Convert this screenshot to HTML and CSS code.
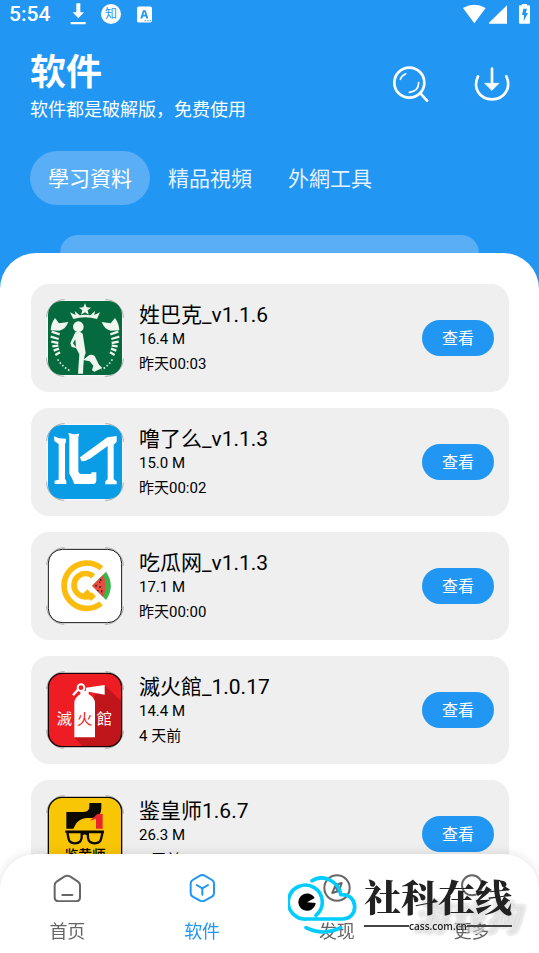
FILE: index.html
```html
<!DOCTYPE html>
<html lang="zh-CN">
  <head>
    <meta charset="UTF-8">
    <meta name="viewport" content="width=device-width, initial-scale=1">
    <title>软件</title>
    <link rel="stylesheet" href="styles.css">
  </head>
  <body>
    <div class="app">
      <header class="header">
        <div class="status-bar">
          <span class="time">5:54</span>
          <svg width="16" height="22" viewBox="211 11 48 66" fill="#fff">
            <path d="M230 12h12v27h11l-17 18-17-18h11zM213 68h45v7h-45z"/>
          </svg>
          <svg class="zhi" width="20" height="20" viewBox="0 0 20 20">
            <circle cx="10" cy="10" r="10" fill="#fff"/>
            <text x="10" y="14" class="zhi-text">知</text>
          </svg>
          <svg width="15" height="17" viewBox="0 0 45 50">
            <rect y="1" width="45" height="48" rx="5" fill="#fff"/>
            <path d="M10 37 18 12h8l8 25h-6l-2-6h-8l-2 6zM19 26h6l-3-9z" fill="#2196f3" fill-rule="evenodd"/>
            <path d="M23 42h4v3h-4zM31 42h4v3h-4zM38 42h4v3h-4z" fill="#2196f3"/>
          </svg>
          <div class="status-right">
            <svg width="23" height="20" viewBox="578 10 69 60" fill="#fff">
              <path d="M578 22q34-20 68 0l-34 46z"/>
            </svg>
            <svg width="18" height="20" viewBox="657 10 54 60" fill="#fff">
              <path d="M711 14v55h-54v-3z"/>
            </svg>
            <svg class="battery" width="11" height="20" viewBox="747 10 33 60">
              <path d="M756 10h15v4h7l2 2v51l-2 2h-29l-2-2V16l2-2h7z" fill="#fff"/>
              <path d="M760 24h11l-4 13h7l-13 25 1-19h-6z" fill="#2196f3"/>
            </svg>
          </div>
        </div>

        <div class="title-row">
          <div>
            <h1>软件</h1>
            <p class="subtitle">软件都是破解版，免费使用</p>
          </div>
          <div class="actions">
            <button type="button" aria-label="搜索">
              <svg width="36" height="36" viewBox="369 198 108 108" fill="none" stroke="#fff" stroke-linecap="round">
                <circle cx="418" cy="248" r="45" stroke-width="8"/>
                <path d="M452 281l19 21" stroke-width="8"/>
                <path d="M391 238q4-11 16-17M446 248q0 25-28 29" stroke-width="5"/>
              </svg>
            </button>
            <button type="button" aria-label="下载">
              <svg width="36" height="36" viewBox="612 198 108 108" fill="none" stroke="#fff" stroke-linecap="round">
                <path d="M624 229c-17 36 5 69 42 69s59-33 43-69" stroke-width="8"/>
                <path d="M666 206v48" stroke-width="8"/>
                <path d="M645 250h42l-21 21z" fill="#fff" stroke-width="2"/>
              </svg>
            </button>
          </div>
        </div>

        <div class="tabs">
          <button type="button" class="tab active">學习資料</button>
          <button type="button" class="tab">精品視頻</button>
          <button type="button" class="tab">外網工具</button>
        </div>
        <div class="banner"></div>
      </header>

      <main class="panel">
        <div class="card">
          <svg class="icon" viewBox="48 57 234 234">
            <rect class="ring" x="50" y="59" width="230" height="230" rx="54"/>
            <rect x="54" y="63" width="222" height="222" rx="42" fill="#056a3d"/>
            <g fill="#eef6ee">
              <path d="M165 70l5 12 13 1-10 8 3 13-11-7-12 7 4-13-10-8 13-1z"/>
              <path d="M120 97l17 8-3-12 15 13 16-2 16 2 14-13-2 12 17-8-9 20q-36-10-71 0z"/>
              <path d="M75 114l12 16 28-4q-8 22-27 26l-26-1q1-21 13-37z"/>
              <path d="M255 114l-13 16-27-4q8 22 27 26l26-1q-1-21-13-37z"/>
              <circle cx="145" cy="140" r="16"/>
              <path d="M136 157q14-5 22 4l9 58q-7 13-8 62h-15l4-58-10-19-13-3-4-12zM136 178l-7 12 9 12z" fill-rule="evenodd"/>
              <path d="M162 238l16-13q15-4 19 9l10 20 10 10-24 11-7-4 4-14-11-13-16-3z"/>
            </g>
            <path d="M65 155l24 8M62 170l24 7M64 185l21 4M67 199l18-2M71 212l16-6M76 225l14-8M265 155l-24 8M268 170l-24 7M266 185l-21 4M263 199l-18-2M259 212l-16-6M254 225l-14-8" stroke="#eef6ee" stroke-width="7"/>
            <path d="M83 238q15 24 41 36M247 238q-12 20-32 31" fill="none" stroke="#d5e8dc" stroke-width="5" stroke-dasharray="5 6"/>
          </svg>
          <div class="info">
            <h2>姓巴克_v1.1.6</h2>
            <p>16.4 M</p>
            <p>昨天00:03</p>
          </div>
          <button type="button" class="view">查看</button>
        </div>

        <div class="card">
          <svg class="icon" viewBox="48 54 234 234">
            <rect class="ring" x="50" y="56" width="230" height="230" rx="54"/>
            <rect x="54" y="60" width="222" height="222" rx="42" fill="#0a9de5"/>
            <g fill="#fff">
              <path d="M72 94l15 6 21 1v10l-3 5v106l4 5v10H74v-10l12-3V117l-13-9z"/>
              <path d="M115 84l17 4 16-2-3 11v98q0 12 10 12h26q4 0 4-5h14v24q0 11-10 11h-56q-7-20-15-31V96z"/>
              <path d="M150 157l82-60 28-4v17l-9 9v104l9 6v9h-34v-9l7-6V123l-51 37q-14 9-28 9z"/>
            </g>
          </svg>
          <div class="info">
            <h2>噜了么_v1.1.3</h2>
            <p>15.0 M</p>
            <p>昨天00:02</p>
          </div>
          <button type="button" class="view">查看</button>
        </div>

        <div class="card">
          <svg class="icon" viewBox="48 51 234 234">
            <rect class="ring" x="50" y="53" width="230" height="230" rx="54"/>
            <rect x="55" y="58" width="220" height="220" rx="42" fill="#fff" stroke="#111" stroke-width="3"/>
            <g fill="none" stroke="#fbbc0d" stroke-width="17">
              <path d="M214 115a68 68 0 1 0-1 105"/>
              <path d="M190 139a35 35 0 1 0-10 59M166 184l17 17 9-8"/>
            </g>
            <path d="M228 125q29 42 0 85l-42-43z" fill="#3bb44a"/>
            <path d="M220 134q13 34-1 67l-33-34z" fill="#e94b40"/>
            <path d="M212 147v6M198 164v6M210 168v6M215 181v6M204 180v4M207 157h4" stroke="#222" stroke-width="4"/>
          </svg>
          <div class="info">
            <h2>吃瓜网_v1.1.3</h2>
            <p>17.1 M</p>
            <p>昨天00:00</p>
          </div>
          <button type="button" class="view">查看</button>
        </div>

        <div class="card">
          <svg class="icon" viewBox="48 48 234 234">
            <rect class="ring" x="50" y="50" width="230" height="230" rx="54"/>
            <rect x="55" y="55" width="220" height="220" rx="42" fill="#ee1c23"/>
            <path d="M224 91l50 48v94q0 41-42 41h-73l-25-26 60-126z" fill="#c0151b"/>
            <rect x="55" y="55" width="220" height="220" rx="42" fill="none" stroke="#160506" stroke-width="4"/>
            <g fill="#fff">
              <path d="M133 247V145q0-17 18-27v-11h25v11q19 10 19 27v102z"/>
              <path d="M168 98l56-8v29l-56-10z"/>
            </g>
            <circle cx="153" cy="98" r="10" fill="none" stroke="#fff" stroke-width="6"/>
            <path d="M145 103l-16 18" stroke="#fff" stroke-width="7"/>
            <g class="mie-text">
              <text x="80" y="206">滅</text>
              <text x="141" y="206" class="red">火</text>
              <text x="200" y="206">館</text>
            </g>
          </svg>
          <div class="info">
            <h2>滅火館_1.0.17</h2>
            <p>14.4 M</p>
            <p>4 天前</p>
          </div>
          <button type="button" class="view">查看</button>
        </div>

        <div class="card">
          <svg class="icon" viewBox="48 60 234 234">
            <rect class="ring" x="50" y="62" width="230" height="230" rx="54"/>
            <rect x="55" y="67" width="220" height="220" rx="42" fill="#f9c606" stroke="#080600" stroke-width="4"/>
            <path d="M109 111h52q17 0 17-17V84h36v16q0 25-25 29h-20q-17 1-30 16l-9 16h-21z" fill="#0c0900"/>
            <path d="M180 137l22-20h16v44h-20v-29z" fill="#e8262c"/>
            <g fill="none" stroke="#0c0900" stroke-width="7">
              <path d="M112 171h43v17q-2 17-20 17t-20-17zM173 171h45l-4 17q-2 17-20 17t-20-17zM155 178q9-6 18 0M106 170h116"/>
            </g>
            <text x="104" y="254" class="jian-text">鉴黄师</text>
          </svg>
          <div class="info">
            <h2>鉴皇师1.6.7</h2>
            <p>26.3 M</p>
            <p>5 天前</p>
          </div>
          <button type="button" class="view">查看</button>
        </div>
      </main>
    </div>

    <nav class="nav">
      <a href="#">
        <svg viewBox="70 297 84 84">
          <path d="M81 320l24-16q8-4 16 0l24 16q6 4 6 12v35q0 12-12 12H87q-12 0-12-12v-35q0-8 6-12zM98 360h30"/>
        </svg>
        首页
      </a>
      <a href="#" class="active">
        <svg viewBox="475 298 84 84">
          <path d="M511 303q7-4 14 0l22 13q6 4 6 10v29q0 7-6 11l-22 12q-7 4-14 0l-22-12q-6-4-6-11v-29q0-6 6-10zM501 331l17 10 17-10M518 341v19"/>
        </svg>
        软件
      </a>
      <a href="#">
        <svg viewBox="0 0 84 84">
          <circle cx="42" cy="42" r="38"/>
          <path d="M56 27 38 33 28 57 48 51zM38 33l3 13 7 5"/>
        </svg>
        发现
      </a>
      <a href="#">
        <svg viewBox="0 0 84 84">
          <circle cx="42" cy="34" r="30"/>
        </svg>
        更多
      </a>
    </nav>

    <span class="stamp">游戏狗</span>
    <div class="brand">
      <svg width="70" height="60" viewBox="52 108 210 180" fill="none" stroke="#0cf" stroke-width="11" stroke-linecap="round">
        <path d="M136 226a51 51 0 1 0-26 11h105c50 0 50-76-4-73M124 122c34-22 82 3 86 42M106 263q52 26 104 0"/>
        <path d="M109 187l23-13a26 26 0 1 0 3 15z" fill="#000" stroke="none"/>
      </svg>
      <div class="brand-text">
        <span class="brand-name">社科在线</span>
        <span class="brand-url">cass.com.cn</span>
      </div>
    </div>
  </body>
</html>
```
FILE: styles.css
```css
* {
  box-sizing: border-box;
  margin: 0;
  padding: 0;
}
body {
  font-family: Roboto, "Noto Sans CJK SC", sans-serif;
  background-color: #2196f3;
  color: #000;
}
button {
  font-family: inherit;
  border: none;
  background: none;
  cursor: pointer;
}
svg {
  display: block;
}
.app {
  height: 100vh;
  overflow: hidden;
  display: flex;
  flex-direction: column;
}

/* header */
.header {
  flex: none;
  color: #fff;
}
.status-bar {
  display: flex;
  align-items: center;
  height: 28px;
  padding: 0 9px;
}
.time {
  width: 61px;
  font-size: 21px;
  font-weight: 500;
}
.zhi {
  margin: 0 16px 0 15px;
}
.zhi-text {
  font-size: 12px;
  text-anchor: middle;
  fill: #2196f3;
}
.status-right {
  display: flex;
  gap: 3px;
  margin-left: auto;
}
.battery {
  margin-left: 9px;
}
.title-row {
  display: flex;
  justify-content: space-between;
  padding: 21px 29px 0 30px;
}
h1 {
  font-size: 36px;
  line-height: 48px;
  font-weight: 700;
}
.subtitle {
  font-size: 18px;
  line-height: 26px;
}
.actions {
  display: flex;
  align-items: flex-start;
  gap: 45px;
  padding-top: 17px;
}
.tabs {
  display: flex;
  padding: 28px 30px 30px;
}
.tab {
  height: 54px;
  padding: 0 18px 2px;
  border-radius: 27px;
  font-size: 21px;
  color: #e6f2fd;
}
.tab.active {
  background-color: #59aef6;
  color: #fff;
}
.banner {
  height: 18px;
  margin: 0 60px;
  border-radius: 18px 18px 0 0;
  background-color: #59aef6;
}

/* app list */
.panel {
  flex: 1 0 auto;
  display: flex;
  flex-direction: column;
  gap: 16px;
  padding: 31px 30px 110px 31px;
  border-radius: 36px 36px 0 0;
  background-color: #fff;
}
.card {
  display: flex;
  align-items: center;
  height: 108px;
  padding: 0 15px;
  border-radius: 18px;
  background-color: #efefef;
}
.icon {
  width: 78px;
  height: 78px;
}
/* only the four corners of the ring are stroked */
.ring {
  fill: #f8f8f8;
  stroke: #888;
  stroke-width: 2;
  stroke-dasharray: 85 122;
  stroke-dashoffset: 85;
}
.mie-text {
  font-size: 46px;
  fill: #fff;
}
.mie-text .red {
  fill: #ee1c23;
}
.jian-text {
  font-size: 41px;
  font-weight: 500;
}
.info {
  flex: 1;
  margin-left: 15px;
  padding-top: 4px;
}
.info h2 {
  font-size: 21px;
  line-height: 24px;
  font-weight: 400;
}
.info p {
  font-size: 15px;
  line-height: 25px;
}
.view {
  width: 72px;
  height: 36px;
  padding-bottom: 2px;
  border-radius: 18px;
  font-size: 16px;
  color: #fff;
  background-color: #2196f3;
}

/* bottom navigation */
.nav {
  position: fixed;
  left: 0;
  right: 0;
  bottom: 0;
  display: flex;
  height: 99px;
  padding-top: 20px;
  border-radius: 36px 36px 0 0;
  background-color: #fff;
  box-shadow: 0 0 12px rgba(0, 0, 0, 0.12);
}
.nav a {
  flex: 1;
  display: flex;
  flex-direction: column;
  align-items: center;
  gap: 17px;
  font-size: 18px;
  line-height: 26px;
  color: #666;
  text-decoration: none;
}
.nav svg {
  width: 28px;
  height: 28px;
  fill: none;
  stroke: currentColor;
  stroke-width: 6;
  stroke-linecap: round;
  stroke-linejoin: round;
}
.nav .active {
  color: #2196f3;
}

/* site marks over the page */
.stamp {
  position: fixed;
  right: 18px;
  bottom: 12px;
  font-size: 36px;
  line-height: 44px;
  font-weight: 900;
  font-style: italic;
  color: rgba(255, 255, 255, 0.5);
  text-shadow: 0 0 3px rgba(0, 0, 0, 0.25);
}
.brand {
  position: fixed;
  right: 27px;
  bottom: 17px;
  display: flex;
  gap: 6px;
}
.brand-text {
  display: flex;
  flex-direction: column;
}
.brand-name {
  font-family: "Noto Serif CJK SC", "Noto Sans CJK SC", serif;
  font-size: 37px;
  line-height: 40px;
  font-weight: 900;
  color: #222;
}
.brand-url {
  display: flex;
  align-items: center;
  font-family: "Open Sans", sans-serif;
  font-size: 10px;
  line-height: 20px;
  font-weight: 600;
  color: #222;
}
.brand-url::before,
.brand-url::after {
  content: "";
  flex: 1;
  height: 2px;
  background-color: #444;
}
```
